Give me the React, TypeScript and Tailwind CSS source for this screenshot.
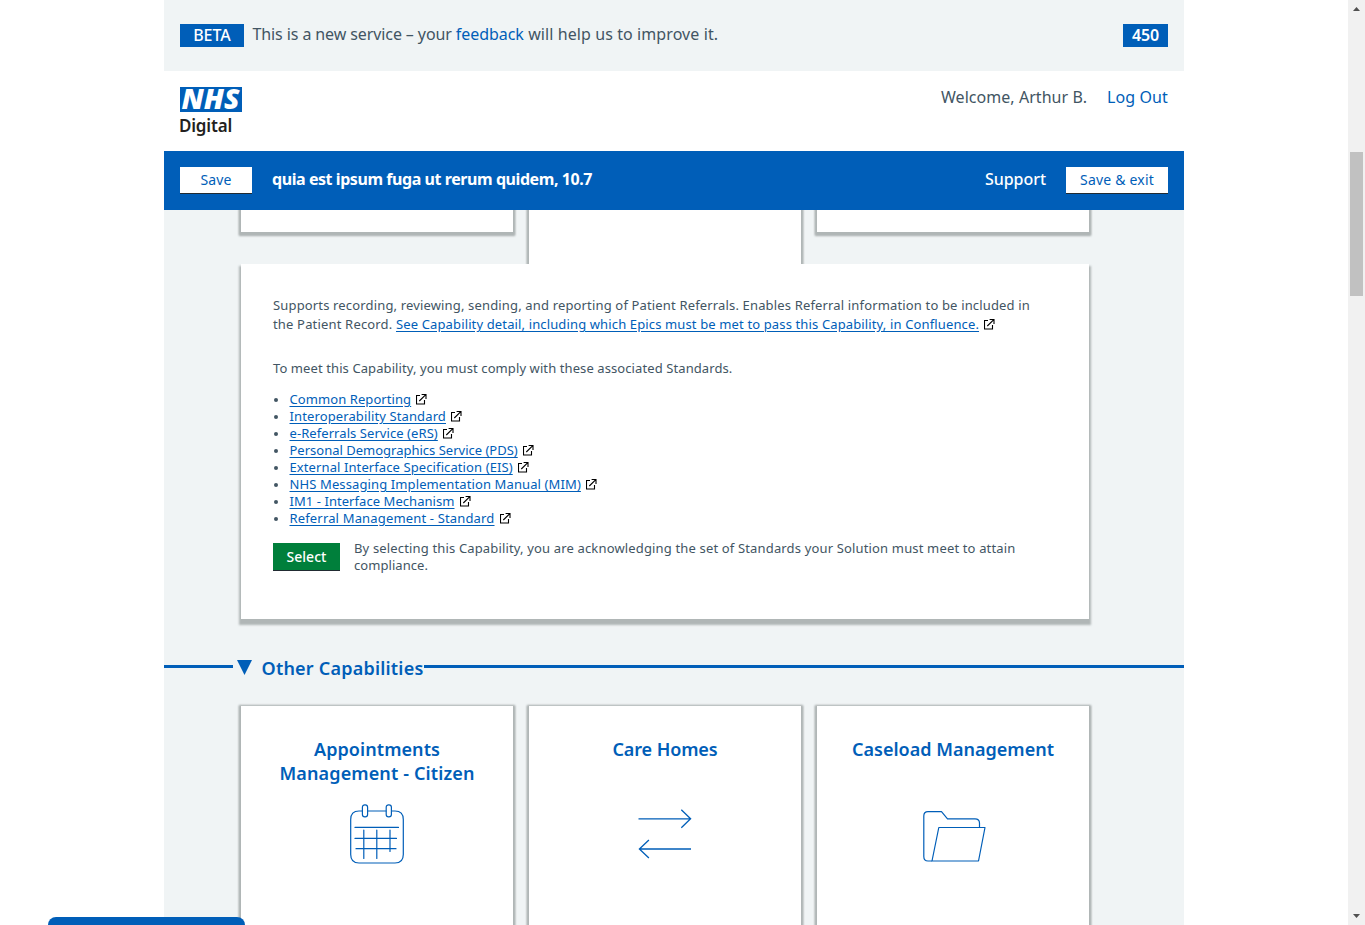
import type { ReactNode } from 'react'

const cardShadow = 'shadow-[0_2px_2px_2px_#b0b6b6,0_1px_2px_2px_#b0b6b6]'

const standards: { label: string; tracking: string }[] = [
  { label: 'Common Reporting', tracking: 'tracking-[0.08px]' },
  { label: 'Interoperability Standard', tracking: 'tracking-[0.12px]' },
  { label: 'e-Referrals Service (eRS)', tracking: 'tracking-[0.07px]' },
  { label: 'Personal Demographics Service (PDS)', tracking: 'tracking-[0px]' },
  { label: 'External Interface Specification (EIS)', tracking: 'tracking-[0.1px]' },
  { label: 'NHS Messaging Implementation Manual (MIM)', tracking: 'tracking-[0.115px]' },
  { label: 'IM1 - Interface Mechanism', tracking: 'tracking-[0.056px]' },
  { label: 'Referral Management - Standard', tracking: 'tracking-[0.161px]' },
]

function ExternalIcon() {
  return (
    <svg className="ml-[5px] inline-block h-[11px] w-[11px] align-[-1px]" viewBox="0 0 11 11" fill="none" stroke="#000" strokeWidth="1.1">
      <path d="M4 1.500H.5v8.500H8.500V6" />
      <path d="M5.600.5h4.400v4.600M3.300 7 9.800.7" />
    </svg>
  )
}

function NhsLogo() {
  return (
    <div className="w-[62px]">
      <svg className="block h-[25px] w-[62px] overflow-visible" viewBox="0 0 62 25">
        <rect width="62" height="25" fill="#005eb8" />
        <text
          x="1.5"
          y="22.2"
          fill="#fff"
          fontFamily="Open Sans, sans-serif"
          fontSize="27.5"
          fontStyle="italic"
          fontWeight="800"
          textLength="58"
          lengthAdjust="spacingAndGlyphs"
        >
          NHS
        </text>
      </svg>
      <div className="mt-[5px] -ml-px text-[17px] leading-[18px] font-semibold tracking-[-0.195px] text-[#231f20]">Digital</div>
    </div>
  )
}

function CalendarIcon() {
  return (
    <svg className="h-[60px] w-[54px]" viewBox="0 0 54 60" fill="none" stroke="#005eb8" strokeWidth="1.2" strokeLinecap="round">
      <path d="M12.5 7H9Q.7 7 .7 15.5V50.500Q.7 59 9 59H45Q53.300 59 53.300 50.500V15.500Q53.300 7 45 7H41.500M36 7H17.500" />
      <rect x="12.400" y=".8" width="5.200" height="12" rx="2.400" />
      <rect x="36.200" y=".8" width="5.200" height="12" rx="2.400" />
      <path d="M5 23.400H48.500M5 34.400H46.500M6 44.700H46M13.800 26V54.500M26.800 26V54.500M40 26V47.500" />
    </svg>
  )
}

function ArrowsIcon() {
  return (
    <svg className="h-[50px] w-[54px]" viewBox="0 0 54 50" fill="none" stroke="#005eb8" strokeWidth="1.300">
      <path d="M.5 9.800H52.500M43.300.8 52.600 9.800 43.300 18.800" />
      <path d="M53 40H1.500M10.900 31 1.400 40 10.900 49" />
    </svg>
  )
}

function FolderIcon() {
  return (
    <svg className="h-[51px] w-[63px]" viewBox="0 0 63 51" fill="none" stroke="#005eb8" strokeWidth="1.200" strokeLinejoin="round">
      <path d="M9 50H5Q.8 50 .8 45.500V5Q.8.7 5 .7H18.500L24.500 7.800H52Q56.500 7.800 56.500 12V16.500" />
      <path d="M15.800 16.500H62L55.500 50H9Z" />
    </svg>
  )
}

function CapabilityCard({ title, iconTop, children }: { title: ReactNode; iconTop: string; children: ReactNode }) {
  return (
    <div className={`flex h-[260px] w-[272px] flex-col items-center bg-white pt-[31px] ${cardShadow}`}>
      <h3 className="text-center text-[18px] leading-6 font-semibold whitespace-nowrap text-[#005eb8]">{title}</h3>
      <div className={iconTop}>{children}</div>
    </div>
  )
}

function Scrollbar() {
  return (
    <div className="flex h-full w-[17px] shrink-0 flex-col items-center bg-[#f1f1f1]">
      <svg className="h-[17px] w-[17px]" viewBox="0 0 17 17" fill="#505050">
        <path d="M5 11h7L8.500 7z" />
      </svg>
      <div className="mt-[135px] h-[144px] w-[13px] bg-[#c1c1c1]" />
      <svg className="mt-auto h-[17px] w-[17px]" viewBox="0 0 17 17" fill="#505050">
        <path d="M5 6h7l-3.500 4z" />
      </svg>
    </div>
  )
}

export default function App() {
  return (
    <div className="relative flex h-[925px] w-[1365px] overflow-hidden bg-white font-['Noto_Sans','Open_Sans',sans-serif] text-[#425563]">
      <div className="flex min-w-0 flex-1 justify-center">
        <div className="flex w-[1020px] flex-col">
          <div className="flex h-[71px] shrink-0 bg-[#f0f4f5] px-4 text-[16px]">
            <div className="mt-6 h-[23px] w-16 bg-[#005eb8] text-center leading-[22px] font-medium text-white">BETA</div>
            <p className="mt-[22px] ml-[8.500px] leading-6 whitespace-nowrap">
              <span className="tracking-[-0.1px]">This is a new service – your </span>
              <a className="tracking-[-0.05px] text-[#005eb8]">feedback</a>
              <span className="tracking-[0.09px]"> will help us to improve it.</span>
            </p>
            <div className="mt-6 ml-auto h-[23px] w-[45px] bg-[#005eb8] text-center leading-[22px] font-semibold tracking-[-0.1px] text-white">450</div>
          </div>

          <header className="flex h-20 shrink-0 justify-between px-4">
            <div className="pt-4">
              <NhsLogo />
            </div>
            <div className="flex gap-5 pt-[14px] text-[16px] leading-6 whitespace-nowrap">
              <span className="tracking-[0.045px]">Welcome, Arthur B.</span>
              <a className="tracking-[0.11px] text-[#005eb8]">Log Out</a>
            </div>
          </header>

          <div className="flex h-[59px] shrink-0 items-start bg-[#005eb8] px-4 pt-4 text-white">
            <button className="h-[27px] w-[72px] border-b border-[#212b32] bg-white text-[14px] leading-[26px] tracking-[0.11px] text-[#005eb8]">Save</button>
            <h1 className="ml-[20px] text-[16px] leading-6 font-bold tracking-[-0.432px] whitespace-nowrap">quia est ipsum fuga ut rerum quidem, 10.7</h1>
            <a className="mr-5 ml-auto text-[16px] leading-6 font-medium tracking-[-0.05px]">Support</a>
            <button className="h-[27px] w-[102px] border-b border-[#212b32] bg-white text-[14px] leading-[26px] tracking-[0.2px] whitespace-nowrap text-[#005eb8]">Save &amp; exit</button>
          </div>

          <main className="min-h-0 flex-1 overflow-hidden bg-[#f0f4f5]">
            <div className="ml-[77px] w-[848px]">
              <div className="-mt-4 flex h-[70px] gap-4">
                <div className={`h-[38px] w-[272px] bg-white ${cardShadow}`} />
                <div className={`h-[70px] w-[272px] bg-white ${cardShadow}`} />
                <div className={`h-[38px] w-[272px] bg-white ${cardShadow}`} />
              </div>

              <section className="relative h-[355px] bg-white px-8 pt-[32px] text-[13px] leading-[17px] shadow-[0_4px_2px_2px_#b0b6b6]">
                <p className="leading-[19px] whitespace-nowrap">
                  <span className="tracking-[0.156px]">Supports recording, reviewing, sending, and reporting of Patient Referrals. Enables Referral information to be included in</span>
                  <br />
                  <span className="tracking-[0.17px]">the Patient Record. </span>
                  <a className="tracking-[0.133px] text-[#005eb8] underline underline-offset-[1.500px]">See Capability detail, including which Epics must be met to pass this Capability, in Confluence.</a>
                  <ExternalIcon />
                </p>
                <p className="mt-[26px] leading-[17px] tracking-[0.095px] whitespace-nowrap">To meet this Capability, you must comply with these associated Standards.</p>
                <ul className="mt-[14px]">
                  {standards.map((s) => (
                    <li key={s.label} className="flex h-[17px] items-center whitespace-nowrap">
                      <span className="mt-px mr-[11.500px] ml-px h-1 w-1 rounded-full bg-[#425563]" />
                      <span>
                        <a className={`text-[#005eb8] underline underline-offset-[1.500px] ${s.tracking}`}>{s.label}</a>
                        <ExternalIcon />
                      </span>
                    </li>
                  ))}
                </ul>
                <div className="mt-[13px] flex items-start">
                  <button className="mt-[3px] h-[28px] w-[67px] border-b border-[#212b32] bg-[#007f3b] text-[14px] leading-[27px] font-medium text-white">Select</button>
                  <p className="ml-[14px] whitespace-nowrap">
                    <span className="tracking-[0.155px]">By selecting this Capability, you are acknowledging the set of Standards your Solution must meet to attain</span>
                    <br />
                    <span className="tracking-[0.06px]">compliance.</span>
                  </p>
                </div>
              </section>
            </div>

            <div className="mt-[36px] flex h-6 items-center">
              <div className="-mt-px h-[3px] w-[69px] bg-[#005eb8]" />
              <svg className="ml-1 h-[15px] w-[15px]" viewBox="0 0 15 15" fill="#005eb8">
                <path d="M0 0h15L7.500 15z" />
              </svg>
              <h2 className="ml-[9.500px] h-6 w-[162.500px] text-[18px] leading-[26px] font-semibold tracking-[0.214px] whitespace-nowrap text-[#005eb8]">Other Capabilities</h2>
              <div className="-mt-px h-[3px] flex-1 bg-[#005eb8]" />
            </div>

            <div className="mt-[27px] ml-[77px] flex gap-4">
              <CapabilityCard
                iconTop="mt-[19px]"
                title={
                  <>
                    <span className="tracking-[0.075px]">Appointments</span>
                    <br />
                    <span className="tracking-[0.125px]">Management - Citizen</span>
                  </>
                }
              >
                <CalendarIcon />
              </CapabilityCard>
              <CapabilityCard iconTop="mt-[48px]" title={<span className="tracking-[-0.1px]">Care Homes</span>}>
                <ArrowsIcon />
              </CapabilityCard>
              <CapabilityCard iconTop="mt-[50px] ml-[2px]" title={<span className="tracking-[0.013px]">Caseload Management</span>}>
                <FolderIcon />
              </CapabilityCard>
            </div>
          </main>
        </div>
      </div>
      <Scrollbar />
      <div className="absolute -bottom-2 left-12 h-4 w-[197px] rounded-t-[8px] bg-[#005eb8]" />
    </div>
  )
}
